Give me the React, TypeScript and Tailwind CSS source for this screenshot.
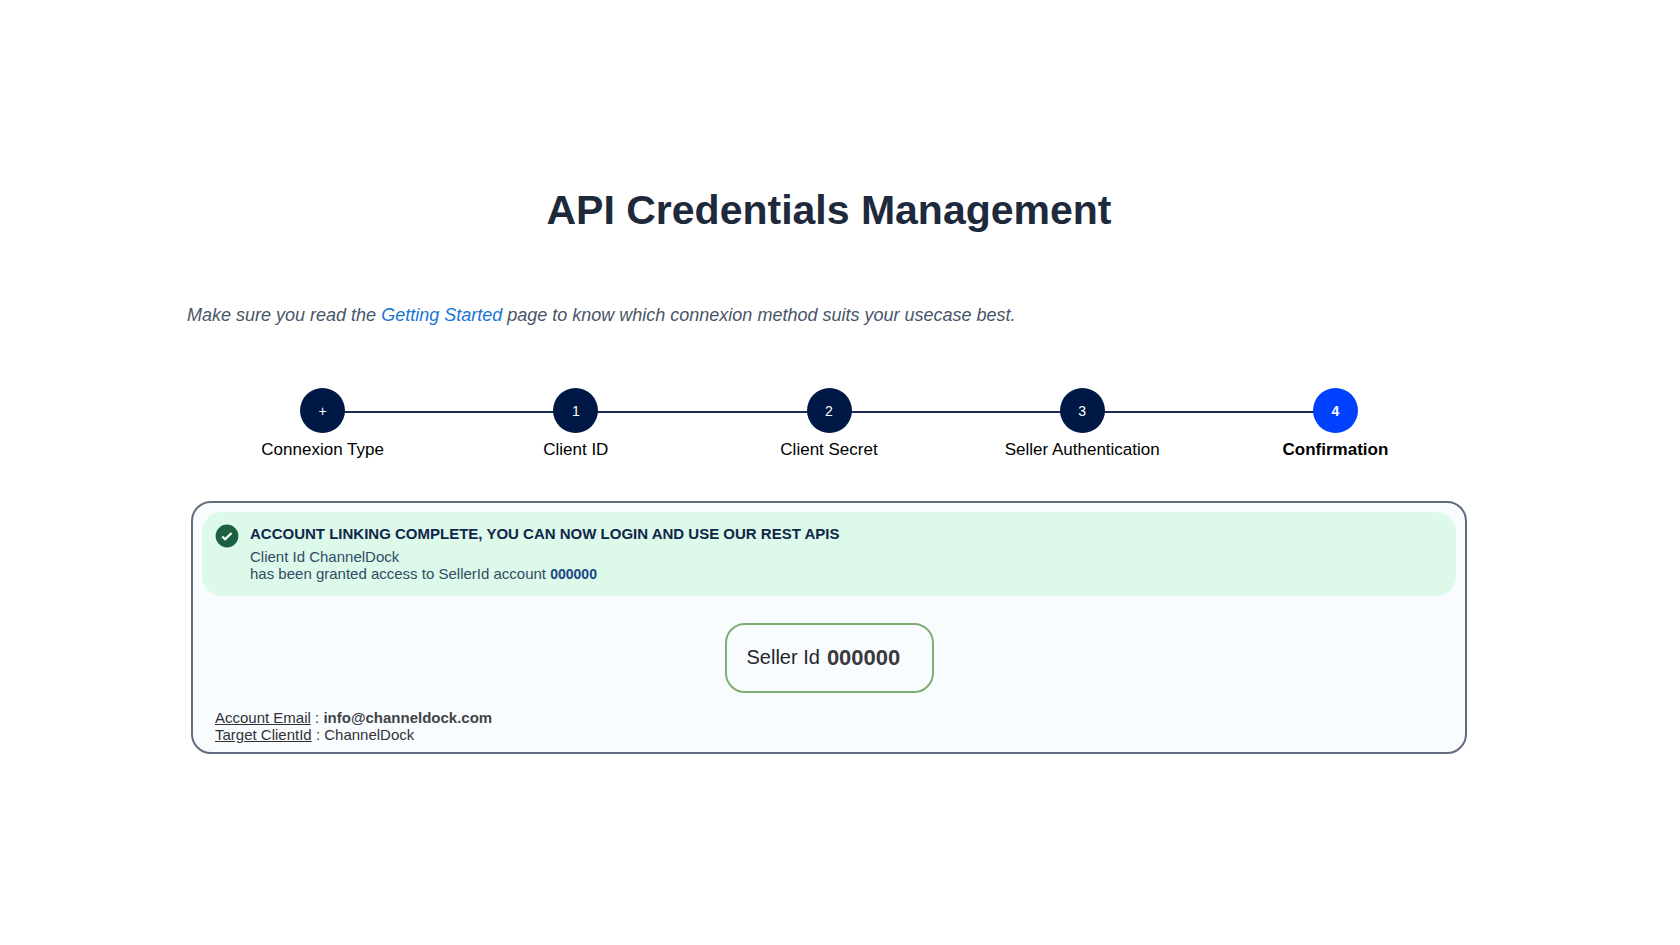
import React from 'react';

interface Step {
  marker: string;
  label: string;
}

const steps: Step[] = [
  { marker: '+', label: 'Connexion Type' },
  { marker: '1', label: 'Client ID' },
  { marker: '2', label: 'Client Secret' },
  { marker: '3', label: 'Seller Authentication' },
  { marker: '4', label: 'Confirmation' },
];

const CheckIcon: React.FC = () => (
  <svg viewBox="0 0 24 24" className="w-6 h-6 shrink-0" aria-hidden="true">
    <circle cx="12" cy="12" r="11.4" fill="#1c5f41" />
    <path d="M7.2 12.6l3 2.6 6.4-6.2" fill="none" stroke="#f1fbf5" strokeWidth="2.3" />
  </svg>
);

const Stepper: React.FC<{ current: number }> = ({ current }) => (
  <ol className="flex px-[9px]">
    {steps.map((step, i) => {
      const active = i === current;
      return (
        <li key={step.label} className="relative flex flex-1 flex-col items-center" aria-current={active ? 'step' : undefined}>
          {i > 0 && <span className="absolute top-[23px] right-1/2 h-0.5 w-full bg-[#1c2b54]" />}
          <span
            className={
              active
                ? 'relative z-10 flex w-[45px] h-[45px] items-center justify-center rounded-full bg-[#0040ff] text-sm font-bold text-white'
                : 'relative z-10 flex w-[45px] h-[45px] items-center justify-center rounded-full bg-[#001845] text-sm text-white'
            }
          >
            {step.marker}
          </span>
          <span className={active ? 'mt-[5px] text-[17px] leading-6 font-bold' : 'mt-[5px] text-[17px] leading-6'}>{step.label}</span>
        </li>
      );
    })}
  </ol>
);

const App: React.FC = () => {
  return (
    <div className="min-h-screen bg-white pl-4 pr-[38px] pt-[185px] pb-16 font-['Liberation_Sans',Arial,sans-serif] text-black">
      <main className="mx-auto w-full max-w-[1284px]">
        <h1 className="text-center text-[41px] leading-[50px] font-bold text-[#1e293b]">API Credentials Management</h1>
        <p className="mt-[68px] text-lg leading-6 italic text-[#475569]">
          Make sure you read the{' '}
          <a href="#getting-started" className="text-[#1976d2]">Getting Started</a>{' '}
          page to know which connexion method suits your usecase best.
        </p>

        <div className="mt-[61px]">
          <Stepper current={4} />
        </div>

        <section className="mx-1 mt-[39px] rounded-[20px] border-2 border-[#646b80] bg-[#f9fcff] px-[9px] py-[9px]">
          <div className="flex gap-[11px] rounded-[20px] bg-[#dcf9ea] px-[13px] pt-3 pb-[14px]">
            <CheckIcon />
            <div>
              <h2 className="text-[15px] leading-5 font-bold text-[#10264a]">
                ACCOUNT LINKING COMPLETE, YOU CAN NOW LOGIN AND USE OUR REST APIS
              </h2>
              <p className="mt-1 text-[15px] leading-[17px] text-[#334b66]">
                Client Id ChannelDock
                <br />
                has been granted access to SellerId account <b className="text-sm leading-none text-[#1d4586]">000000</b>
              </p>
            </div>
          </div>

          <div className="mx-auto mt-[27px] flex w-[209px] h-[70px] items-center gap-[7px] rounded-[20px] border-2 border-[#7fae73] px-5 pb-0.5 text-[#252528]">
            <span className="text-xl">Seller Id</span>
            <b className="text-[22px] text-[#3a3a3c]">000000</b>
          </div>

          <div className="mt-4 px-[13px] text-[15px] leading-[17px] text-[#303236]">
            <p>
              <u>Account Email</u> : <b className="text-[#424448]">info@channeldock.com</b>
            </p>
            <p>
              <u>Target ClientId</u> : ChannelDock
            </p>
          </div>
        </section>
      </main>
    </div>
  );
};

export default App;
